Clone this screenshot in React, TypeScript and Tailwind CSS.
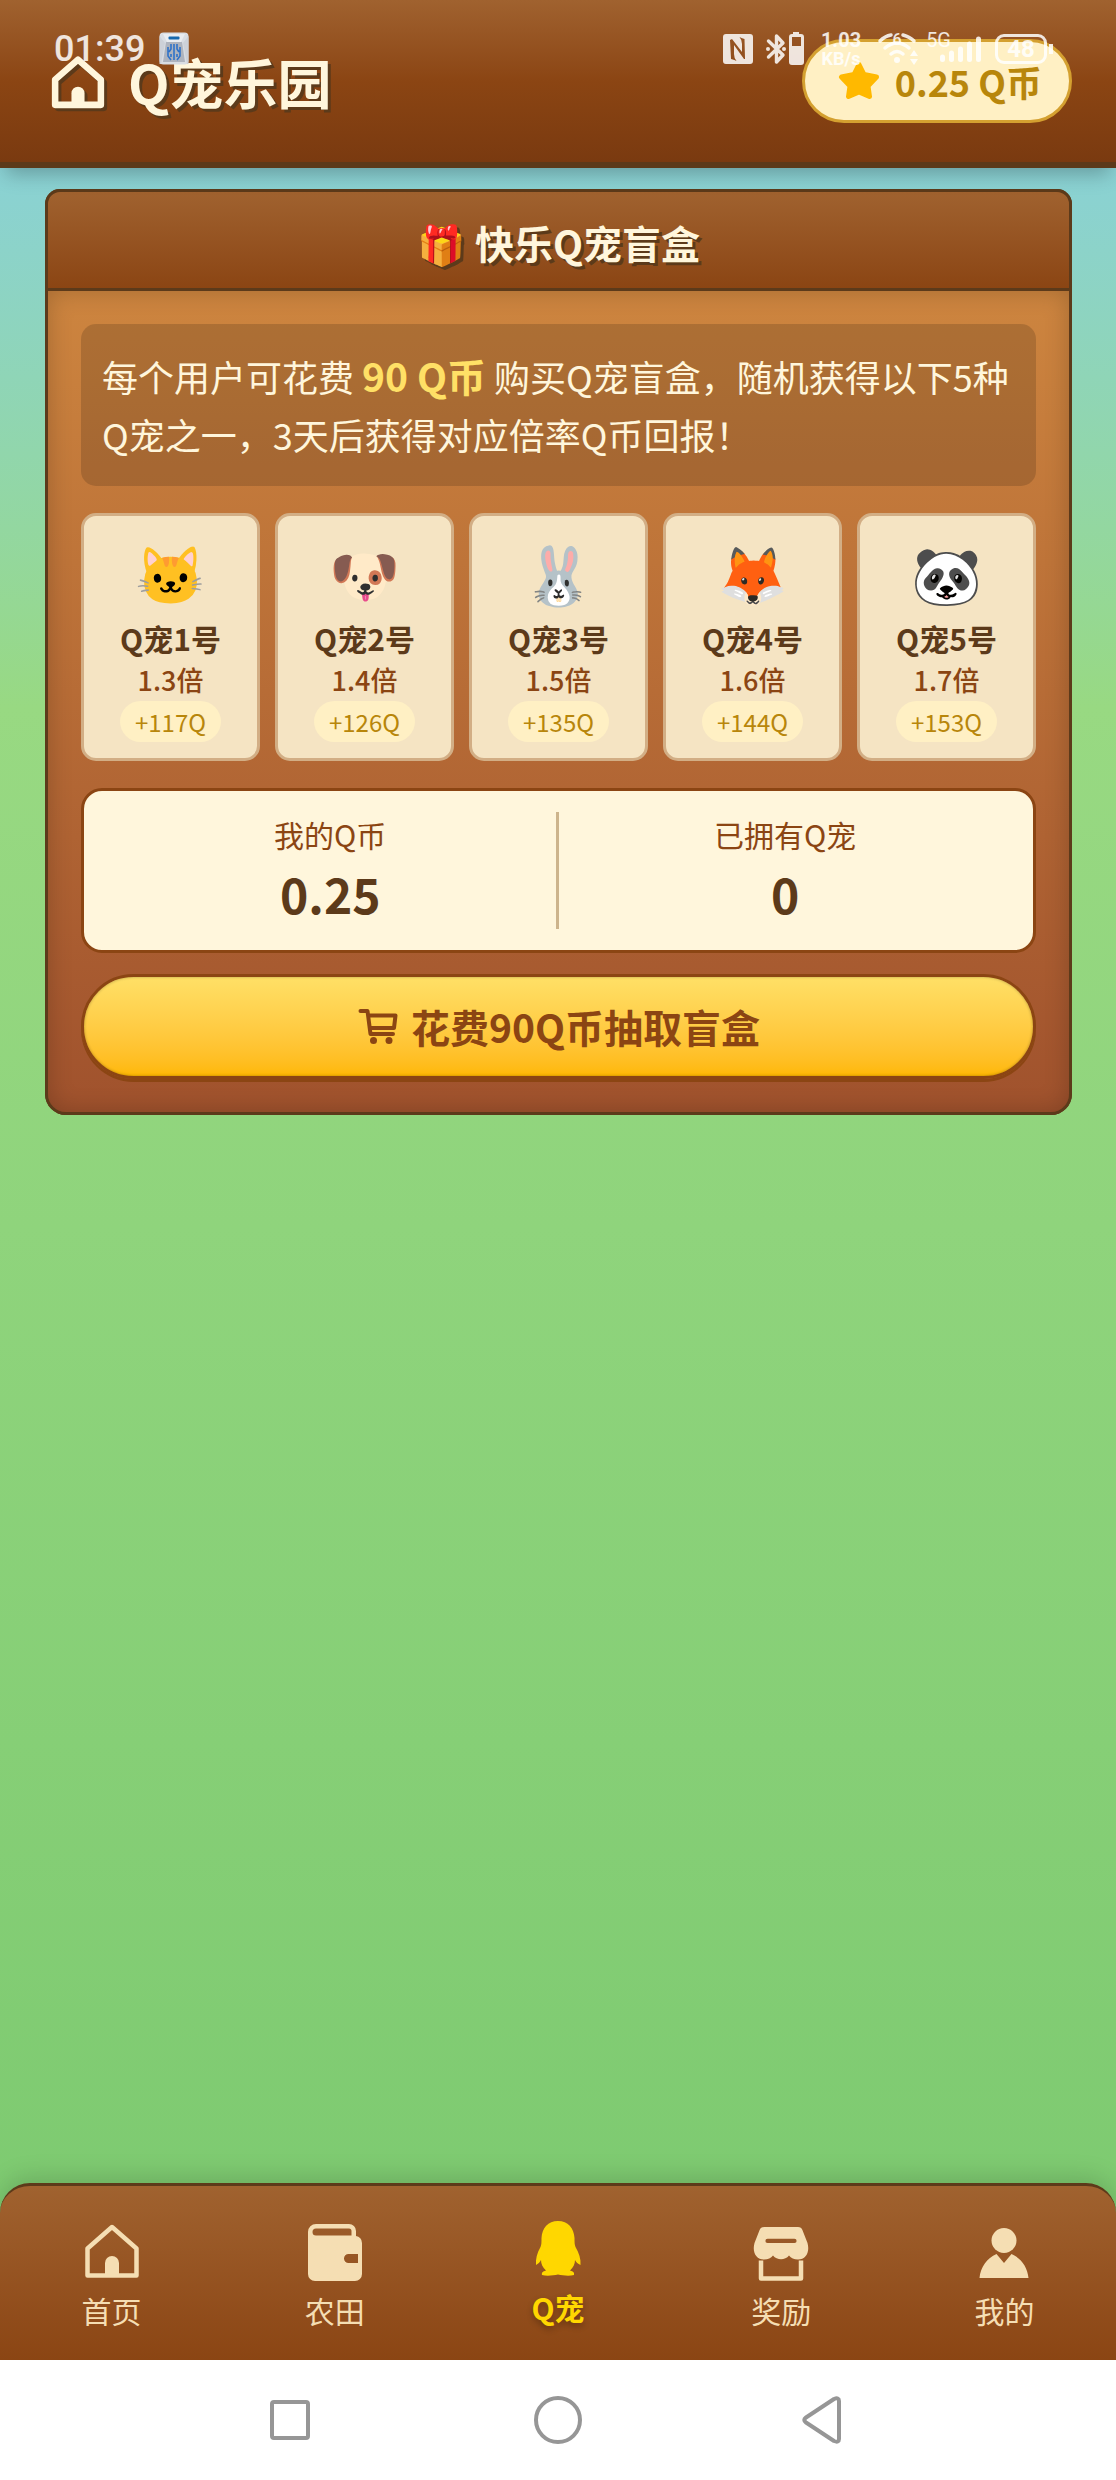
import type { ReactNode } from "react";
import clsx from "clsx";

const pets = [
  { name: "Q宠1号", emoji: "🐱", rate: "1.3倍", reward: "+117Q" },
  { name: "Q宠2号", emoji: "🐶", rate: "1.4倍", reward: "+126Q" },
  { name: "Q宠3号", emoji: "🐰", rate: "1.5倍", reward: "+135Q" },
  { name: "Q宠4号", emoji: "🦊", rate: "1.6倍", reward: "+144Q" },
  { name: "Q宠5号", emoji: "🐼", rate: "1.7倍", reward: "+153Q" },
];

function HomeIcon({ className, strokeWidth }: { className?: string; strokeWidth: number }) {
  return (
    <svg viewBox="0 0 60 60" className={className} aria-hidden="true">
      <path
        d="M30 6 L54.5 27.5 V54.5 H5.5 V27.5 Z"
        fill="none"
        stroke="currentColor"
        strokeWidth={strokeWidth}
        strokeLinejoin="round"
      />
      <path d="M23 55 V42 a7 7 0 0 1 14 0 V55 Z" fill="currentColor" />
    </svg>
  );
}

function WalletIcon({ className }: { className?: string }) {
  return (
    <svg viewBox="0 0 60 60" className={className} fill="currentColor" aria-hidden="true">
      <path
        fillRule="evenodd"
        d="M11 3 H44 a7 7 0 0 1 7 7 V15 a7 7 0 0 1 6 7 V53 a7 7 0 0 1 -7 7 H10 a7 7 0 0 1 -7 -7 V11 a8 8 0 0 1 8 -8 Z M11 7.500 a3.500 3.500 0 0 0 0 7 H46.500 V10 a2.500 2.500 0 0 0 -2.500 -2.500 Z M43.500 33 a4.500 4.500 0 0 0 0 9 H53 V33 Z"
      />
    </svg>
  );
}

function PenguinIcon({ className }: { className?: string }) {
  return (
    <svg viewBox="0 0 60 60" className={className} fill="currentColor" aria-hidden="true">
      <path d="M30 0 C20 0 14 7 13.500 17 C13.500 21 13.500 24 12.500 26 C9 32 7.500 38 8 44 C10 43 12 41 13 39 C13 43 14.500 46 18 49.500 C14.500 50.500 13.500 51.500 14 54 C19 55.300 25 54.500 30 53.500 C35 54.500 41 55.300 46 54 C46.500 51.500 45.500 50.500 42 49.500 C45.500 46 47 43 47 39 C48 41 50 43 52.500 44 C53 38 51 32 47.500 26 C46.500 24 46.500 21 46.500 17 C46 7 40 0 30 0 Z" />
    </svg>
  );
}

function ShopIcon({ className }: { className?: string }) {
  return (
    <svg viewBox="0 0 60 60" className={className} fill="currentColor" aria-hidden="true">
      <path
        fillRule="evenodd"
        d="M13 6 H47 a5 5 0 0 1 4.500 3.200 L56.500 22 C59 31 55 38.500 47 38.500 C43 38.500 40 37 38 34.500 C34 39.500 26 39.500 22 34.500 C20 37 17 38.500 13 38.500 C5 38.500 1 31 3.500 22 L8.500 9.200 A5 5 0 0 1 13 6 Z M16.500 17.800 a2.100 2.100 0 0 0 0 4.200 H43.500 a2.100 2.100 0 0 0 0 -4.200 Z"
      />
      <path
        d="M10 39.500 V57.500 H50 V39.500"
        fill="none"
        stroke="currentColor"
        strokeWidth="4.5"
        strokeLinejoin="round"
      />
    </svg>
  );
}

function UserIcon({ className }: { className?: string }) {
  return (
    <svg viewBox="0 0 60 60" className={className} fill="currentColor" aria-hidden="true">
      <circle cx="30" cy="19.500" r="12.500" />
      <path d="M5.500 57 C6.500 46 13 37 22.500 33 L30 42 L37.500 33 C47 37 53.500 46 54.500 57 Z" />
    </svg>
  );
}

function StarIcon({ className }: { className?: string }) {
  return (
    <svg viewBox="0 0 42 42" className={className} aria-hidden="true">
      <path
        d="M21 4.500 L26 14.500 L38.500 17 L30 26 L31.500 36.500 L21 32 L10.500 36.500 L12 26 L3.500 17 L16 14.500 Z"
        fill="currentColor"
        stroke="currentColor"
        strokeWidth="5"
        strokeLinejoin="round"
      />
    </svg>
  );
}

function CartIcon({ className }: { className?: string }) {
  return (
    <svg viewBox="0 0 42 42" className={className} aria-hidden="true">
      <path
        d="M3.500 5 H10.500 L13.500 28 H36 M11.500 9.500 H38.500 L37 22 H13"
        fill="none"
        stroke="currentColor"
        strokeWidth="4"
        strokeLinecap="round"
        strokeLinejoin="round"
      />
      <circle cx="16.500" cy="34.500" r="3.500" fill="currentColor" />
      <circle cx="32" cy="34.500" r="3.500" fill="currentColor" />
    </svg>
  );
}

const tabs: { name: string; icon: ReactNode; active?: boolean }[] = [
  { name: "首页", icon: <HomeIcon className="size-[60px]" strokeWidth={4.5} /> },
  { name: "农田", icon: <WalletIcon className="size-[60px]" /> },
  { name: "Q宠", icon: <PenguinIcon className="size-[60px]" />, active: true },
  { name: "奖励", icon: <ShopIcon className="size-[60px]" /> },
  { name: "我的", icon: <UserIcon className="size-[60px]" /> },
];

// Phone status bar, lies over the page header
function StatusBar() {
  return (
    <div className="pointer-events-none absolute inset-x-0 top-0 flex items-start justify-between pt-[31px] pr-[63px] pl-[54px] font-[Roboto,sans-serif] text-white/85">
      <div className="flex items-start gap-3.5">
        <span className="text-4xl leading-9 font-medium">01:39</span>
        <svg viewBox="0 0 30 34" className="mt-px h-[34px] w-[30px]" aria-hidden="true">
          <rect x="0.500" y="0.500" width="29" height="32" rx="4" fill="#d9dde3" />
          <path d="M0.500 4 L6 11 L2 32 H28 L24 11 L29.500 4 V32 H0.500 Z" fill="#cdd1d8" />
          <path d="M7 10 H23 L26 30 H4 Z" fill="#aeb3bd" />
          <path d="M4 2 H26 L22 10 H8 Z" fill="#e9ecf0" />
          <rect x="9.500" y="4.500" width="11" height="3" rx="1" fill="#1668ad" />
          <g fill="none" stroke="#2f72c8" strokeWidth="1.600">
            <path d="M12 12 V17 L10 20 M15 12 V28 M18 12 V17 L20 20 M9 15 V24 L12 28 M21 15 V24 L18 28 M12 22 V25 M18 22 V25" />
          </g>
        </svg>
      </div>
      <div className="flex items-start">
        <svg viewBox="0 0 30 30" className="mt-[3px] size-[30px]" aria-hidden="true">
          <path
            fillRule="evenodd"
            fill="currentColor"
            d="M3 0 H27 a3 3 0 0 1 3 3 V27 a3 3 0 0 1 -3 3 H3 a3 3 0 0 1 -3 -3 V3 a3 3 0 0 1 3 -3 Z M7 6 L8 25 Q12 26 13.500 27 Q11 24 11 20 V11 L21 25 H22 L21.500 5 Q18 4 16.500 3 Q19 6 19 10 V18 L9 5 Z"
          />
        </svg>
        <svg viewBox="0 0 38 34" className="mt-px ml-[13px] h-[34px] w-[38px]" aria-hidden="true">
          <path
            d="M2.500 9 L17 23 L10.500 30 V4 L17 11 L2.500 25"
            fill="none"
            stroke="currentColor"
            strokeWidth="3.400"
            strokeLinejoin="round"
            strokeLinecap="round"
          />
          <circle cx="2" cy="17" r="2" fill="currentColor" />
          <circle cx="18" cy="17" r="2" fill="currentColor" />
          <path
            fillRule="evenodd"
            fill="currentColor"
            d="M27 0 H33 V2 H35 a3 3 0 0 1 3 3 V30 a3 3 0 0 1 -3 3 H26 a3 3 0 0 1 -3 -3 V5 a3 3 0 0 1 3 -3 H27 Z M26 5 V14 H35 V5 Z"
          />
        </svg>
        <span className="ml-[17px] flex flex-col items-center text-xl leading-[19px] font-bold">
          <span>1.03</span>
          <span className="text-lg leading-[17px]">KB/s</span>
        </span>
        <svg viewBox="0 0 42 34" className="mt-px ml-4 h-[34px] w-[42px]" aria-hidden="true">
          <g fill="none" stroke="currentColor" strokeWidth="3.500" strokeLinecap="round">
            <path d="M3 9 Q8 4 14 3 M26 3 Q33 5 37 9" />
            <path d="M8 16 Q20 6 32 16" />
            <path d="M14 22 Q20 17 26 22" />
          </g>
          <circle cx="20" cy="28" r="3" fill="currentColor" />
          <path d="M37 18 L41 24 H33 Z M37 33 L41 27 H33 Z" fill="currentColor" />
          <text x="20" y="13" textAnchor="middle" fontSize="16" fontWeight="500" fill="currentColor">
            6
          </text>
        </svg>
        <span className="ml-[7px] text-xl leading-[18px]">5G</span>
        <svg viewBox="0 0 42 28" className="mt-1 -ml-[11px] h-7 w-[42px]" aria-hidden="true">
          <path
            d="M2.500 24.500 V22 M11.500 24.500 V18 M20.500 24.500 V14 M29.500 24.500 V9 M38.500 24.500 V4"
            stroke="currentColor"
            strokeWidth="5"
            strokeLinecap="round"
          />
        </svg>
        <span className="mt-[3px] ml-[13px] flex h-[30px] w-[52px] items-center justify-center rounded-[9px] border-3 border-white/85 text-2xl leading-6 font-bold">
          48
        </span>
        <span className="mt-[13px] ml-0.5 h-2.5 w-1 bg-white/85" />
      </div>
    </div>
  );
}

function Header() {
  return (
    <header className="relative flex items-start justify-between border-b-6 border-[#5c3a1a] bg-linear-to-b from-[#a0622f] via-[#8b4513] to-[#7a3a10] pt-[39px] pr-11 pb-[39px] pl-[50px] shadow-[0_12px_18px_-6px_rgba(0,0,0,0.25)]">
      <h1 className="flex h-[84px] items-center gap-[22px] pt-0.5 text-[54px] leading-[84px] font-bold text-[#fff6dc] text-shadow-[3px_3px_0_#5c3a1a]">
        <HomeIcon className="size-14 drop-shadow-[3px_3px_0_#5c3a1a]" strokeWidth={7} />
        Q宠乐园
      </h1>
      <p className="flex h-[84px] items-center gap-[15px] rounded-full border-3 border-[#d4a030] bg-[#fff0c4] pr-[27px] pl-[33px] text-4xl font-bold text-[#b8860b]">
        <StarIcon className="size-[42px] text-[#ffb900]" />
        0.25 Q币
      </p>
      <StatusBar />
    </header>
  );
}

function BlindBoxCard() {
  return (
    <section className="rounded-t-[15px] rounded-b-[21px] bg-[#5c3a1a]">
      <h2 className="flex items-center justify-center rounded-t-[15px] border-3 border-[#5c3a1a] bg-linear-to-b from-[#a0622f] to-[#8b4513] pt-[22px] pb-[18px] text-[39px] leading-[56px] font-bold whitespace-pre text-[#fff6dc] text-shadow-[3px_3px_0_#5c3a1a]">
        🎁 快乐Q宠盲盒
      </h2>
      <div className="rounded-b-[21px] border-3 border-t-0 border-[#5c3a1a] bg-linear-to-b from-[#cd853f] to-[#a0522d] p-[33px] shadow-[inset_0_0_24px_rgba(0,0,0,0.2)]">
        <p className="rounded-[15px] bg-black/15 px-[21px] py-[23px] text-4xl leading-[58px] text-[#fff6dc]">
          每个用户可花费{" "}
          <strong className="text-[39px] leading-none font-bold text-[#ffe066]">90 Q币</strong>{" "}
          购买Q宠盲盒，随机获得以下5种Q宠之一，3天后获得对应倍率Q币回报！
        </p>

        <ul className="mt-[27px] grid grid-cols-5 gap-[15px]">
          {pets.map((pet) => (
            <li
              key={pet.name}
              className="flex flex-col items-center rounded-[15px] border-3 border-[#d2ae85] bg-[#f5e4c3] pt-[15px] pb-4"
            >
              <span className="mb-[5px] text-[57px] leading-[81px]">{pet.emoji}</span>
              <span className="text-3xl leading-[42px] font-bold text-[#5c3a1a]">{pet.name}</span>
              <span className="text-[27px] leading-[42px] font-medium text-[#8b4513]">{pet.rate}</span>
              <span className="rounded-full bg-[#fff0c4] px-[15px] text-2xl leading-[41px] text-[#b8860b]">
                {pet.reward}
              </span>
            </li>
          ))}
        </ul>

        <dl className="mt-[27px] grid grid-cols-2 rounded-[21px] border-3 border-[#8b4513] bg-[#fff6dc] p-[21px] text-center">
          <div className="border-r-3 border-[#cdb48c]">
            <dt className="text-3xl leading-[45px] text-[#8b4513]">我的Q币</dt>
            <dd className="text-5xl leading-[72px] font-bold text-[#5c3a1a]">0.25</dd>
          </div>
          <div>
            <dt className="text-3xl leading-[45px] text-[#8b4513]">已拥有Q宠</dt>
            <dd className="text-5xl leading-[72px] font-bold text-[#5c3a1a]">0</dd>
          </div>
        </dl>

        <button
          type="button"
          className="mt-[21px] flex h-[105px] w-full items-center justify-center gap-3 rounded-full border-3 border-[#8b4513] bg-linear-to-b from-[#ffe066] to-[#ffb800] text-[39px] font-bold text-[#8b4513] shadow-[0_3px_0_#8b4513,inset_0_0_3px_rgba(0,0,0,0.3)]"
        >
          <CartIcon className="size-[42px]" />
          花费90Q币抽取盲盒
        </button>
      </div>
    </section>
  );
}

function TabBar() {
  return (
    <nav className="grid grid-cols-5 rounded-t-[30px] border-t-3 border-[#5c3a1a] bg-linear-to-b from-[#a0622f] to-[#8b4513] pt-[35px] pb-[26px] shadow-[0_-6px_24px_rgba(0,0,0,0.15)]">
      {tabs.map((tab) => (
        <a
          key={tab.name}
          href="#"
          aria-current={tab.active ? "page" : undefined}
          className={clsx(
            "flex flex-col items-center text-3xl leading-[48px]",
            tab.active
              ? "gap-0.5 font-bold text-[#ffd700] text-shadow-[0_3px_6px_rgba(0,0,0,0.3)]"
              : "gap-[5px] text-[#f5deb3]"
          )}
        >
          {tab.icon}
          {tab.name}
        </a>
      ))}
    </nav>
  );
}

function SystemBar() {
  return (
    <div className="grid h-[120px] grid-cols-[1fr_266px_266px_1fr] items-center bg-white text-[#969696]">
      <button type="button" aria-label="最近任务" className="-mr-[22px] justify-self-end">
        <svg viewBox="0 0 48 48" className="size-12" fill="none" stroke="currentColor" strokeWidth="4">
          <rect x="6" y="6" width="36" height="36" rx="2" />
        </svg>
      </button>
      <button type="button" aria-label="主屏幕" className="-mr-6 justify-self-end">
        <svg viewBox="0 0 48 48" className="size-12" fill="none" stroke="currentColor" strokeWidth="4">
          <circle cx="24" cy="24" r="22" />
        </svg>
      </button>
      <button type="button" aria-label="返回" className="-mr-6 justify-self-end">
        <svg
          viewBox="0 0 48 48"
          className="size-12"
          fill="none"
          stroke="currentColor"
          strokeWidth="4"
          strokeLinejoin="round"
        >
          <path d="M6 21.500 L34 3 Q39 1 39 5 V43 Q39 47 34 45 L6 26.500 Q2.500 24 6 21.500 Z" />
        </svg>
      </button>
    </div>
  );
}

export default function App() {
  return (
    <div className="flex min-h-screen flex-col bg-white font-['Noto_Sans_CJK_SC',sans-serif]">
      <div className="flex flex-1 flex-col bg-linear-to-b from-[#87ceeb] via-[#98d982] via-30% to-[#7bc96f]">
        <Header />
        <main className="flex-1 px-11 pt-[21px] pb-8 pl-[45px]">
          <BlindBoxCard />
        </main>
        <TabBar />
      </div>
      <SystemBar />
    </div>
  );
}
